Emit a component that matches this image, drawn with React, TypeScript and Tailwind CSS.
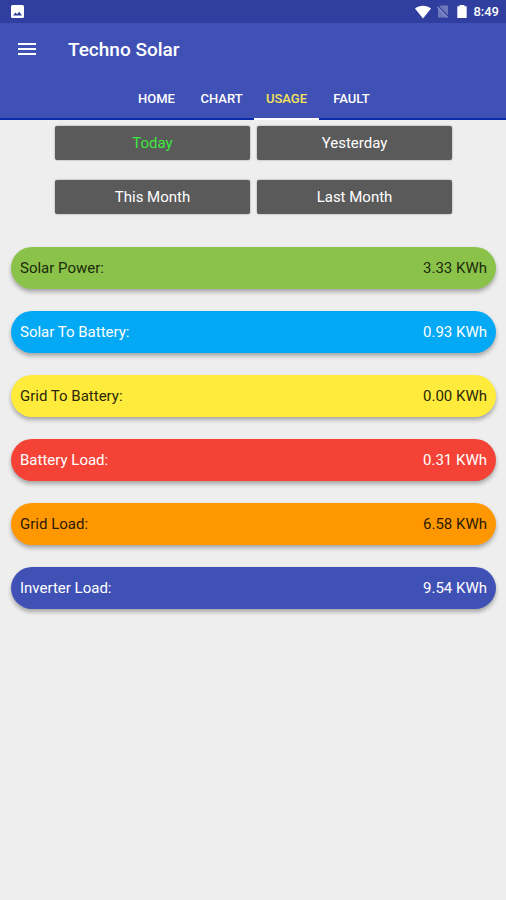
import { useState } from 'react';

interface UsageItem {
  label: string;
  value: string;
  className: string;
}

const tabs = ['HOME', 'CHART', 'USAGE', 'FAULT'];

const periods = ['Today', 'Yesterday', 'This Month', 'Last Month'];

const usageItems: UsageItem[] = [
  { label: 'Solar Power:', value: '3.33 KWh', className: 'bg-[#8bc34a] text-[#1c2a0c]' },
  { label: 'Solar To Battery:', value: '0.93 KWh', className: 'bg-[#03a9f4] text-white' },
  { label: 'Grid To Battery:', value: '0.00 KWh', className: 'bg-[#ffeb3b] text-[#2b2808]' },
  { label: 'Battery Load:', value: '0.31 KWh', className: 'bg-[#f44336] text-white' },
  { label: 'Grid Load:', value: '6.58 KWh', className: 'bg-[#ff9800] text-[#2b1a00]' },
  { label: 'Inverter Load:', value: '9.54 KWh', className: 'bg-[#3f51b5] text-white' },
];

function StatusBar() {
  return (
    <div className="flex h-[23px] items-center justify-between bg-[#303f9f] pr-[7px] pl-[11px] text-white">
      <svg width="13" height="13" viewBox="0 0 13 13" aria-hidden="true">
        <rect width="13" height="13" rx="1.5" fill="#fff" />
        <path d="M2 10.5 4.5 7.5 6 9.2 8.2 6.8 11 10.5z" fill="#303f9f" />
      </svg>
      <div className="flex items-center">
        <svg width="16" height="14" viewBox="0 0 16 14" aria-hidden="true">
          <path d="M0 3.6C4.6-.2 11.4-.2 16 3.6L8 13.6z" fill="#fff" />
        </svg>
        <svg className="ml-1.5" width="12" height="13" viewBox="0 0 12 13" aria-hidden="true">
          <path d="M3.5 .5H11V12.5H1V3z" fill="#fff" fillOpacity=".3" />
          <path d="M.5 1 11.5 12.5" stroke="#303f9f" strokeWidth="2.4" />
          <path d="M.5 1.8 10.5 12.5" stroke="#fff" strokeOpacity=".45" strokeWidth="1.2" />
        </svg>
        <svg className="ml-2" width="10" height="13" viewBox="0 0 10 13" aria-hidden="true">
          <path d="M2.5 0H7.5V1.2H9.7V13H.3V1.2H2.5z" fill="#fff" />
        </svg>
        <span className="ml-1.5 text-[13px] leading-4 font-medium">8:49</span>
      </div>
    </div>
  );
}

export default function App() {
  const [activeTab, setActiveTab] = useState('USAGE');
  const [period, setPeriod] = useState('Today');

  return (
    <div className="min-h-screen bg-[#eeeeee] font-[Roboto,sans-serif]">
      <StatusBar />

      <header className="border-b-2 border-[#0a2cab] bg-[#3f51b5] text-white">
        <div className="flex h-[54px] items-center px-[18px]">
          <button type="button" aria-label="Menu" className="h-[14px] w-[18px]">
            <svg width="18" height="14" viewBox="0 0 18 14" aria-hidden="true">
              <path d="M0 1H18M0 6H18M0 11H18" stroke="#fff" strokeWidth="2" />
            </svg>
          </button>
          <h1 className="ml-8 text-[19px] font-medium">Techno Solar</h1>
        </div>

        <nav className="-mb-0.5 flex justify-center pl-0.5">
          {tabs.map((tab) => (
            <button
              key={tab}
              type="button"
              onClick={() => setActiveTab(tab)}
              className={`h-[43px] w-[65px] border-b-2 pt-0.5 text-[13px] font-medium ${
                activeTab === tab ? 'border-white text-[#f5e356]' : 'border-transparent text-white'
              }`}
            >
              {tab}
            </button>
          ))}
        </nav>
      </header>

      <main>
        {/* period buttons */}
        <div className="grid grid-cols-2 gap-x-[7px] gap-y-5 pt-1.5 pr-[54px] pl-[55px]">
          {periods.map((item) => (
            <button
              key={item}
              type="button"
              onClick={() => setPeriod(item)}
              className={`h-[34px] rounded-xs bg-[#5a5a5b] text-[15px] shadow-[0_0_2px_rgba(0,0,0,0.4)] ${
                period === item ? 'text-[#3be83b]' : 'text-white'
              }`}
            >
              {item}
            </button>
          ))}
        </div>

        {/* usage rows */}
        <ul className="mt-[33px] flex flex-col gap-[22px] pr-2.5 pl-[11px]">
          {usageItems.map((item) => (
            <li
              key={item.label}
              className={`flex h-[42px] items-center justify-between rounded-full px-[9px] text-[15px] shadow-[0_3px_4px_rgba(0,0,0,0.3)] ${item.className}`}
            >
              <span>{item.label}</span>
              <span>{item.value}</span>
            </li>
          ))}
        </ul>
      </main>
    </div>
  );
}
